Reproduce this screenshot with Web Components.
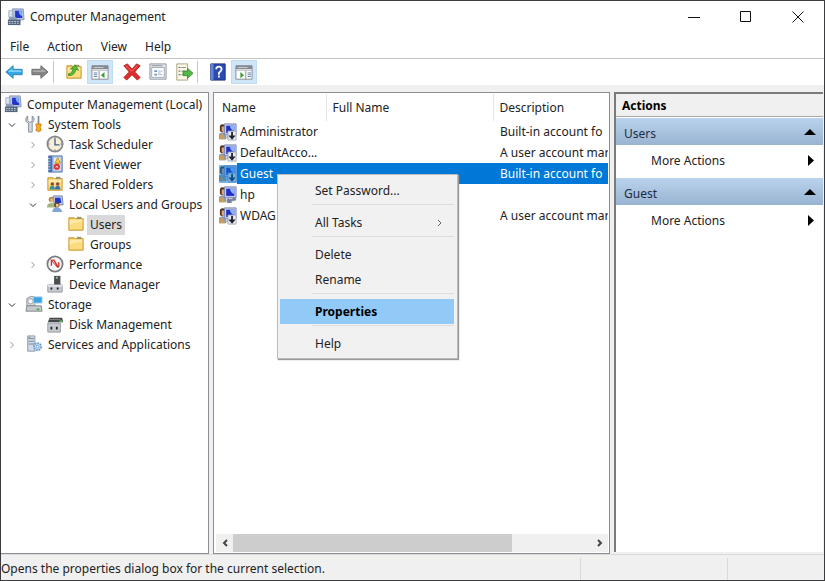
<!DOCTYPE html>
<html lang="en">
<head>
<meta charset="utf-8">
<meta name="viewport" content="width=device-width, initial-scale=1">
<title>Computer Management</title>
<style>
  body {
    margin: 0;
    font: 12px/20px 'Noto Sans', 'Open Sans', sans-serif;
    color: #222;
  }
</style>
</head>
<body>
<mmc-window>
  <title-bar slot="top" icon="computer">Computer Management</title-bar>
  <menu-bar slot="top"></menu-bar>
  <tool-bar slot="top"></tool-bar>

  <tree-item slot="tree" icon="computer" label="Computer Management (Local)" root>
    <tree-item icon="tools" label="System Tools" state="open">
      <tree-item icon="clock" label="Task Scheduler" state="closed"></tree-item>
      <tree-item icon="events" label="Event Viewer" state="closed"></tree-item>
      <tree-item icon="shared" label="Shared Folders" state="closed"></tree-item>
      <tree-item icon="group" label="Local Users and Groups" state="open">
        <tree-item icon="folder" label="Users" selected></tree-item>
        <tree-item icon="folder" label="Groups"></tree-item>
      </tree-item>
      <tree-item icon="performance" label="Performance" state="closed"></tree-item>
      <tree-item icon="device" label="Device Manager"></tree-item>
    </tree-item>
    <tree-item icon="storage" label="Storage" state="open">
      <tree-item icon="disk" label="Disk Management"></tree-item>
    </tree-item>
    <tree-item icon="services" label="Services and Applications" state="closed"></tree-item>
  </tree-item>

  <user-list slot="list"></user-list>
  <context-menu slot="list"></context-menu>

  <actions-pane slot="actions">
    <action-group heading="Users">More Actions</action-group>
    <action-group heading="Guest">More Actions</action-group>
  </actions-pane>

  <status-bar slot="status">Opens the properties dialog box for the current selection.</status-bar>
</mmc-window>

<script>
const person = `
  <path d="M1 3q3-3 6 0v6q-3 3-6 0z" fill="#4a3528"/>
  <path d="M3 4h4v5q-2 2-4 0z" fill="#e0a878"/>
  <path d="M0 18v-6q4-3 8 0v6z" fill="#8c9cb8"/>
  <path d="M1 14l3-2 3 6H1z" fill="#c8a05c"/>`;

const monitor = `
  <path d="M6 1h13v12H6z" fill="#c4cce8" stroke="#7681b0"/>
  <path d="M8 3h9v8H8z" fill="#1d2fc4"/>
  <path d="M12 3h5v6q-4-1-5-6z" fill="#8fb4fa"/>
  <path d="M9 14h7l1 3H8z" fill="#9aa3bd"/>`;

const badge = `
  <path d="M10 9h9v10h-9z" fill="#e9ebf2" stroke="#a6adbb"/>
  <path d="M13.500 10v4h-3l4 4.500 4-4.500h-3v-4z" fill="#20242c"/>`;

const folder = `
  <path d="M2 3h6l1 1h9v13H2z" fill="#e6b94f" stroke="#cf9f38"/>
  <path d="M11 2h5v3h-5z" fill="#9a9a68"/>
  <path d="M3 5h14v11H3z" fill="#fbdc80"/>
  <path d="M3 5h14v3q-7-1-14 3z" fill="#ffe9a8"/>`;

const usb = `
  <path d="M2 11h16v8H2z" fill="#c6c9ce" stroke="#96999f"/>
  <path d="M2 11h16v2H2z" fill="#e3e5e8"/>
  <path d="M5 14h2v2H5zM12 14h2v2h-2z" fill="#222"/>`;

const icons = {
  computer: `
    <path d="M6 1h12l1 12-12 1z" fill="#b7c3dc" stroke="#8392b8"/>
    <path d="M9 3h7l1 8H9z" fill="#1f35cb"/>
    <path d="M13 3h3l1 6q-4-1-4-6z" fill="#83aef7"/>
    <path d="M2 3h4v7H2z" fill="#dce4f0" stroke="#a0afc8"/>
    <path d="M2 10h8l2 4H2z" fill="#8d9cb6"/>
    <path d="M1 13h14v6H1z" fill="#51657f"/>
    <path d="M2 15h12M2 17h12" stroke="#c6d1df" stroke-dasharray="2 1"/>`,
  tools: `
    <path d="M3 1v5l2 2h2l1-2V1q3 2 2 5l-2 3v10H4V9L1 7Q0 3 3 1z" fill="#d5dae0" stroke="#7f8893"/>
    <path d="M14 1h2v10h-2z" fill="#888e96"/>
    <path d="M12 10h6l-1 4 1 3q-3 3-6 0l1-3z" fill="#f2ae23" stroke="#cf7c10"/>`,
  clock: `
    <circle cx="10" cy="10" r="8.500" fill="#f0e6c3" stroke="#858a92" stroke-width="2"/>
    <circle cx="10" cy="10" r="6.500" fill="#fff" opacity=".4"/>
    <path d="M10 4v7h5" fill="none" stroke="#40608d" stroke-width="1.500"/>
    <path d="M10 2v2M10 16v2M2 10h2M16 10h2" stroke="#777"/>`,
  events: `
    <path d="M3 1h15v18H3z" fill="#a9c4e8" stroke="#5878a5"/>
    <path d="M3 1h4v18H3z" fill="#4671b5"/>
    <path d="M2 4h3M2 7h3M2 10h3M2 13h3M2 16h3" stroke="#c3cfe0"/>
    <path d="M9 3h7v14H9z" fill="#e4ecf7"/>
    <path d="M13 3l3 6h-6z" fill="#ffd233" stroke="#c48a0b"/>
    <circle cx="12" cy="13" r="3.500" fill="#d9362f"/>
    <path d="M11 12l2 2M13 12l-2 2" stroke="#fff"/>`,
  shared: `${folder}
    <circle cx="7" cy="10" r="2" fill="#8c4b2f"/><path d="M4 16q0-4 3-4t3 4z" fill="#3c8e9b"/>
    <circle cx="13" cy="10" r="2" fill="#8c4b2f"/><path d="M10 16q0-4 3-4t3 4z" fill="#3870b3"/>`,
  group: `
    <path d="M8 1h10l1 10H9z" fill="#bfc9e6" stroke="#7180ad"/><path d="M10 3h6l1 6h-7z" fill="#1d34c6"/>
    <circle cx="6" cy="5" r="3" fill="#b58a4e"/><path d="M5 4h3v4H5z" fill="#ecb684"/>
    <path d="M1 14q0-5 5-5t5 5z" fill="#a3b67d"/>
    <circle cx="12" cy="11" r="3" fill="#6b4a2e"/><path d="M11 10h3v3h-3z" fill="#f0c498"/>
    <path d="M7 19q0-5 5-5t6 5z" fill="#7fa6d4"/>`,
  folder,
  performance: `
    <circle cx="10" cy="10" r="8.500" fill="#f7f7f7" stroke="#7a7e84" stroke-width="2"/>
    <path d="M6 12V7q0-2 3-1l4 7q2 1 1-5" fill="none" stroke="#d22b2b" stroke-width="1.500"/>
    <path d="M5 5l8 9" stroke="#b81d1d"/>`,
  device: `
    <path d="M9 1h7v11H9z" fill="#4b4e52"/><path d="M11 2h2v2h-2z" fill="#a8d08c"/>${usb}`,
  storage: `
    <path d="M2 4q4-4 9-2v10H2z" fill="#d5d8dc" stroke="#90959b"/>
    <circle cx="6" cy="7" r="3" fill="#f2f3f5" stroke="#999"/>
    <path d="M9 2h10v7H9z" fill="#38a5e0" stroke="#b8d7e9"/>
    <path d="M2 12h16l1 6H1z" fill="#c5c8cc" stroke="#7f8488"/>
    <path d="M13 15h3v2h-3z" fill="#43b649"/>`,
  disk: `
    <path d="M4 3h14l1 5H2z" fill="#44474a"/><path d="M4 5h12" stroke="#888"/>
    <path d="M15 6h3v2h-3z" fill="#54c058"/>
    <path d="M2 9h14v10H2z" fill="#c6c9ce" stroke="#96999f"/>
    <path d="M5 13h2v3H5zM11 13h2v3h-2z" fill="#222"/>`,
  services: `
    <path d="M3 1h8v17H3z" fill="#d1dae6" stroke="#8796aa"/>
    <path d="M4 4h6M4 7h6M4 10h6" stroke="#6e8299"/>
    <path d="M4 2h2v1H4z" fill="#44a94b"/>
    <circle cx="14" cy="13" r="4" fill="#c7dcf0" stroke="#6e9cc9" stroke-width="2" stroke-dasharray="2 1"/>
    <circle cx="14" cy="13" r="1.500" fill="#fff" stroke="#6e9cc9"/>`,
  user: person + monitor + badge,
  'user-selected': person + monitor + badge + '<path d="M0 0h20v20H0z" fill="#0078d7" opacity=".5"/>',
  'user-active': person + monitor + '<path d="M11 13h8v3h-5v3H9v-4z" fill="#788298"/><path d="M11 14h4" stroke="#e4e8ee"/>',
  back: '<path d="M1 10l8-7v4h10v6H9v4z" fill="#35a8e4" stroke="#2480b7"/><path d="M3 10l5-4v2h10v2z" fill="#83d0f5"/>',
  forward: '<path d="M19 10l-8-7v4H1v6h10v4z" fill="#858585" stroke="#666"/><path d="M17 10l-5-4v2H2v2z" fill="#aaa"/>',
  up: `${folder}<path d="M4 12q4 0 5-6l-3 1 5-5 4 6-3-1q-1 7-8 7z" fill="#5abf36" stroke="#3c9022"/>`,
  'pane-left': `
    <path d="M1 3h18v15H1z" fill="#fff" stroke="#83878d"/><path d="M1 3h18v4H1z" fill="#858a92"/>
    <path d="M3 5h11" stroke="#cdd1d7"/><path d="M1 8h18v1H1z" fill="#b8bcc3"/>
    <path d="M3 11h4M3 13h4M3 15h4" stroke="#5e7eab"/><path d="M9 9v9" stroke="#83878d"/>
    <path d="M15 10v7l-4-3.500z" fill="#3f9a38"/>`,
  delete: '<path d="M1 3l4-2 5 6 5-6 4 2-6 7 6 6-3 3-6-6-6 6-3-3 6-6z" fill="#e02b2b" stroke="#b51c1c"/><path d="M3 3l7 6 6-6" fill="none" stroke="#f57c74"/>',
  properties: `
    <path d="M1 1h18v17H1z" fill="#e8eaed" stroke="#8b9098"/><path d="M3 3h12" stroke="#858b95"/>
    <path d="M3 5h14v11H3z" fill="#fff" stroke="#98a6b8"/>
    <path d="M6 8h3v2H6zM6 12h3v2H6z" fill="#6c94bd"/><path d="M10 9h5M10 13h5M10 11h3" stroke="#a3b2c3"/>`,
  export: `
    <path d="M2 1h12v18H2z" fill="#fbf8e4" stroke="#a29c80"/>
    <path d="M4 5h2M4 9h2M4 13h2" stroke="#444"/><path d="M7 5h5M7 9h4M7 13h4" stroke="#8289a2"/>
    <path d="M9 9h5V6l6 5.500-6 5.500v-3H9z" fill="#53b848" stroke="#358a2c"/>`,
  help: `
    <path d="M2 1h16v18H2z" fill="#2c4bb0" stroke="#182f7d"/><path d="M2 1h3v18H2z" fill="#6383dc"/>
    <path d="M8 7q0-3 3-3t3 3q0 2-3 4v2" fill="none" stroke="#fff" stroke-width="2"/>
    <path d="M10 14h2v2h-2z" fill="#fff"/>`,
  'pane-right': `
    <path d="M1 3h18v15H1z" fill="#fff" stroke="#83878d"/><path d="M1 3h18v4H1z" fill="#858a92"/>
    <path d="M3 5h11" stroke="#cdd1d7"/><path d="M1 8h18v1H1z" fill="#b8bcc3"/>
    <path d="M14 11h4M14 13h4M14 15h4" stroke="#5e7eab"/><path d="M12 9v9" stroke="#83878d"/>
    <path d="M6 10v7l4-3.500z" fill="#3f9a38"/>`
};

class MmcIcon extends HTMLElement {
  constructor() {
    super();
    this.attachShadow({mode: 'open'});
  }

  connectedCallback() {
    this.shadowRoot.innerHTML = `
    <style>
    :host { display: block; flex: none; width: 18px; height: 18px; }
    svg { display: block; width: 100%; height: 100%; }
    </style>
    <svg viewBox="0 0 20 20" aria-hidden="true">${icons[this.getAttribute('name')]}</svg>`;
  }
}

class MmcWindow extends HTMLElement {
  constructor() {
    super();
    this.attachShadow({mode: 'open'}).innerHTML = `
    <style>
    :host {
      display: flex;
      flex-direction: column;
      box-sizing: border-box;
      height: 100vh;
      border: 1px solid #3c3c40;
      background: #f0f0f0;
    }
    header { background: #fff; }
    main {
      flex: 1;
      min-height: 0;
      display: grid;
      grid-template-columns: 208px minmax(0, 1fr) 210px;
      gap: 4px;
      padding-top: 7px;
    }
    nav, .list {
      border: 1px solid #8b8e94;
      background: #fff;
      overflow: hidden;
    }
    nav {
      border-left: none;
      padding: 2px 0 0 3px;
    }
    .list {
      position: relative;
      display: flex;
      padding: 1px 1px 1px 2px;
    }
    </style>
    <header><slot name="top"></slot></header>
    <main>
      <nav role="tree"><slot name="tree"></slot></nav>
      <div class="list"><slot name="list"></slot></div>
      <slot name="actions"></slot>
    </main>
    <slot name="status"></slot>`;
  }
}

class TitleBar extends HTMLElement {
  constructor() {
    super();
    this.attachShadow({mode: 'open'}).innerHTML = `
    <style>
    :host {
      display: flex;
      align-items: center;
      height: 32px;
      padding-left: 6px;
    }
    h1 {
      flex: 1;
      margin: 0 0 0 5px;
      font: inherit;
    }
    button {
      width: 52px;
      height: 32px;
      padding: 0;
      border: none;
      background: none;
    }
    button:hover { background: #e5e5e5; }
    svg { display: block; margin: auto; fill: none; stroke: #111; }
    </style>
    <mmc-icon name="${this.getAttribute('icon')}"></mmc-icon>
    <h1><slot></slot></h1>
    <button aria-label="Minimize"><svg width="12" height="12"><path d="M0 6.500h12"/></svg></button>
    <button aria-label="Maximize"><svg width="12" height="12"><path d="M.5 .5h10v10H.5z"/></svg></button>
    <button aria-label="Close"><svg width="12" height="12"><path d="M.5 .5l11 11M11.500 .5l-11 11"/></svg></button>`;
  }
}

class MenuBar extends HTMLElement {
  constructor() {
    super();
    this.attachShadow({mode: 'open'}).innerHTML = `
    <style>
    :host {
      display: flex;
      height: 25px;
      border-bottom: 1px solid #c4c4c4;
    }
    button {
      padding: 2px 9px 0;
      border: none;
      background: none;
      font: inherit;
      color: inherit;
    }
    button:hover { background: #cce8ff; }
    </style>
    ${['File', 'Action', 'View', 'Help'].map(name => `<button>${name}</button>`).join('')}`;
  }
}

class ToolBar extends HTMLElement {
  constructor() {
    super();
    const button = (icon, label, cls = '') =>
      `<button class="${cls}" aria-label="${label}"><mmc-icon name="${icon}"></mmc-icon></button>`;

    this.attachShadow({mode: 'open'}).innerHTML = `
    <style>
    :host {
      display: flex;
      align-items: center;
      height: 26px;
    }
    button {
      display: flex;
      align-items: center;
      justify-content: center;
      box-sizing: border-box;
      width: 26px;
      height: 24px;
      padding: 0;
      border: 1px solid transparent;
      background: none;
    }
    .on {
      border-color: #bfdcf3;
      background: #cfe6f8;
    }
    .gap { margin-left: 6px; }
    hr {
      width: 1px;
      height: 22px;
      margin: 0 7px 0 0;
      border: none;
      background: #c8c8c8;
    }
    </style>
    ${button('back', 'Back')}
    ${button('forward', 'Forward')}
    <hr>
    ${button('up', 'Up one level')}
    ${button('pane-left', 'Show or hide console tree', 'on')}
    ${button('delete', 'Delete', 'gap')}
    ${button('properties', 'Properties')}
    ${button('export', 'Export list')}
    <hr>
    ${button('help', 'Help')}
    ${button('pane-right', 'Show or hide action pane', 'on')}`;
  }
}

class TreeItem extends HTMLElement {
  constructor() {
    super();
    this.attachShadow({mode: 'open'});
  }

  connectedCallback() {
    const state = this.getAttribute('state');
    this.setAttribute('role', 'treeitem');
    this.shadowRoot.innerHTML = `
    <style>
    :host { display: block; }
    .row {
      display: flex;
      height: 20px;
      white-space: nowrap;
    }
    .twisty {
      flex: none;
      width: 16px;
      height: 20px;
      margin-right: 5px;
      padding: 0;
      border: none;
      background: none;
    }
    .twisty svg {
      display: block;
      margin: auto;
      fill: none;
      stroke: #999;
    }
    .open svg { stroke: #333; transform: rotate(90deg); }
    mmc-icon { margin-right: 2px; }
    .label { padding: 0 3px; }
    :host([selected]) .label { background: #d9d9d9; }
    .children { padding-left: 21px; }
    :host([root]) .children { padding-left: 0; }
    </style>
    <div class="row">
      ${this.hasAttribute('root') ? '' : state
        ? `<button class="twisty ${state}" aria-label="Toggle"><svg width="8" height="8"><path d="M2.500 1l3 3-3 3"/></svg></button>`
        : '<span class="twisty"></span>'}
      <mmc-icon name="${this.getAttribute('icon')}"></mmc-icon>
      <span class="label">${this.getAttribute('label')}</span>
    </div>
    <div class="children"><slot></slot></div>`;

    const twisty = this.shadowRoot.querySelector('button');
    if (twisty) {
      twisty.addEventListener('click', () => {
        const open = twisty.classList.toggle('open');
        this.shadowRoot.querySelector('.children').hidden = !open;
      });
    }
  }
}

const users = [
  ['user', 'Administrator', 'Built-in account fo'],
  ['user', 'DefaultAcco...', 'A user account mar'],
  ['user-selected', 'Guest', 'Built-in account fo'],
  ['user-active', 'hp', ''],
  ['user', 'WDAG', 'A user account mar']
];

class UserList extends HTMLElement {
  constructor() {
    super();
    const rows = users.map(([icon, name, description]) => `
      <tr class="${icon}">
        <td class="name"><div>
          <mmc-icon name="${icon}"></mmc-icon>
          <span>${name}</span>
        </div></td>
        <td></td>
        <td>${description}</td>
      </tr>`).join('');

    this.attachShadow({mode: 'open'}).innerHTML = `
    <style>
    :host {
      flex: 1;
      min-width: 0;
      display: flex;
      flex-direction: column;
      justify-content: space-between;
    }
    table {
      width: 100%;
      table-layout: fixed;
      border-collapse: collapse;
    }
    col.name { width: 110px; }
    col.full { width: 167px; }
    th, td {
      height: 21px;
      padding: 0 0 0 7px;
      overflow: hidden;
      white-space: nowrap;
      text-align: left;
      font-weight: normal;
    }
    th {
      box-sizing: border-box;
      height: 27px;
      padding-left: 6px;
    }
    th + th { border-left: 1px solid #e5e5e5; }
    .name { padding: 0; }
    .name div {
      display: flex;
      align-items: center;
      padding-left: 3px;
    }
    .name span {
      flex: 1;
      padding-left: 3px;
      line-height: 21px;
    }
    .user-selected { color: #fff; }
    .user-selected td:not(.name), .user-selected span { background: #0078d7; }
    .scroll {
      display: grid;
      grid-template-columns: 17px 1fr 17px;
      height: 18px;
      background: #f0f0f0;
    }
    .scroll button {
      padding: 0;
      border: none;
      background: none;
    }
    .scroll svg {
      display: block;
      margin: auto;
      fill: none;
      stroke: #444;
      stroke-width: 2;
    }
    .thumb { width: 78%; background: #cdcdcd; }
    </style>
    <table>
      <colgroup><col class="name"><col class="full"><col></colgroup>
      <thead><tr><th>Name</th><th>Full Name</th><th>Description</th></tr></thead>
      <tbody>${rows}</tbody>
    </table>
    <div class="scroll">
      <button aria-label="Scroll left"><svg width="8" height="8"><path d="M6 1L3 4l3 3"/></svg></button>
      <div class="thumb"></div>
      <button aria-label="Scroll right"><svg width="8" height="8"><path d="M2 1l3 3-3 3"/></svg></button>
    </div>`;
  }
}

class ContextMenu extends HTMLElement {
  constructor() {
    super();
    this.attachShadow({mode: 'open'}).innerHTML = `
    <style>
    :host {
      position: absolute;
      top: 81px;
      left: 63px;
      box-sizing: border-box;
      width: 181px;
      padding: 3px 3px 2px 2px;
      border: 1px solid #bababa;
      background: #f1f1f1;
      box-shadow: 1px 1px 1px #999;
    }
    button {
      display: flex;
      align-items: center;
      justify-content: space-between;
      width: 100%;
      height: 25px;
      padding: 1px 12px 0 35px;
      border: none;
      background: none;
      font: inherit;
      color: inherit;
    }
    .default {
      background: #91c9f7;
      font-weight: bold;
      color: #000;
    }
    hr {
      height: 1px;
      margin: 1px 0 5px 32px;
      border: none;
      background: #dedede;
    }
    svg { fill: none; stroke: #666; }
    </style>
    <button>Set Password...</button>
    <hr>
    <button>All Tasks <svg width="5" height="8"><path d="M1 1l3 3-3 3"/></svg></button>
    <hr>
    <button>Delete</button>
    <button>Rename</button>
    <hr>
    <button class="default">Properties</button>
    <hr>
    <button>Help</button>`;
  }
}

class ActionsPane extends HTMLElement {
  constructor() {
    super();
    this.attachShadow({mode: 'open'}).innerHTML = `
    <style>
    :host {
      display: block;
      margin: 0 1px 2px 0;
      border-top: 2px solid #7b7b7f;
      border-left: 2px solid #7b7b7f;
      background: #fff;
    }
    h2 {
      margin: 0 0 1px;
      padding: 2px 6px 0;
      border-bottom: 1px solid #a8a8a8;
      background: #f0f0f0;
      font: inherit;
      font-weight: bold;
      color: #000;
    }
    </style>
    <h2>Actions</h2>
    <slot></slot>`;
  }
}

class ActionGroup extends HTMLElement {
  constructor() {
    super();
    this.attachShadow({mode: 'open'}).innerHTML = `
    <style>
    :host { display: block; padding-bottom: 3px; }
    button {
      display: flex;
      align-items: center;
      justify-content: space-between;
      width: 100%;
      height: 30px;
      padding: 1px 9px 0 35px;
      border: none;
      background: none;
      font: inherit;
      color: inherit;
    }
    .head {
      height: 27px;
      padding: 4px 7px 0 8px;
      background: linear-gradient(#bad2ec, #99b4d1);
      color: #1c2c44;
    }
    svg { display: block; fill: #000; }
    </style>
    <button class="head">${this.getAttribute('heading')}<svg width="12" height="12"><path d="M0 7l6-6 6 6z"/></svg></button>
    <button><slot></slot><svg width="6" height="12"><path d="M0 0l6 5.500L0 11z"/></svg></button>`;
  }
}

class StatusBar extends HTMLElement {
  constructor() {
    super();
    this.attachShadow({mode: 'open'}).innerHTML = `
    <style>
    :host {
      display: grid;
      grid-template-columns: 1fr 147px 97px;
      height: 25px;
      border-top: 1px solid #dadada;
      white-space: nowrap;
    }
    span { line-height: 28px; }
    i { margin: 3px 0; border-left: 1px solid #d9d9d9; }
    </style>
    <span><slot></slot></span><i></i><i></i>`;
  }
}

customElements.define('mmc-icon', MmcIcon);
customElements.define('mmc-window', MmcWindow);
customElements.define('title-bar', TitleBar);
customElements.define('menu-bar', MenuBar);
customElements.define('tool-bar', ToolBar);
customElements.define('tree-item', TreeItem);
customElements.define('user-list', UserList);
customElements.define('context-menu', ContextMenu);
customElements.define('actions-pane', ActionsPane);
customElements.define('action-group', ActionGroup);
customElements.define('status-bar', StatusBar);
</script>
</body>
</html>
